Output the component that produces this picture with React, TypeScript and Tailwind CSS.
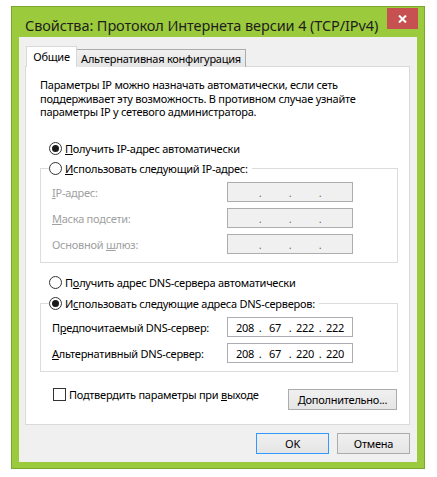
import type { ReactNode } from 'react';

function Radio({ checked }: { checked?: boolean }) {
  return (
    <span className="flex h-[13px] w-[13px] shrink-0 items-center justify-center rounded-full border border-[#333333] bg-white">
      {checked && <span className="h-[7px] w-[7px] rounded-full bg-[#1a1a1a]" />}
    </span>
  );
}

function IpBox({ values, disabled }: { values?: string[]; disabled?: boolean }) {
  const parts = values ?? ['', '', '', ''];
  return (
    <div
      className={
        disabled
          ? 'flex h-[20px] w-[126px] items-center border border-[#adadad] bg-[#f0f0f0] pl-[3px] text-[#6d6d6d]'
          : 'flex h-[20px] w-[126px] items-center border border-[#abadb3] bg-white pl-[3px] text-black'
      }
    >
      {parts.map((p, i) => (
        <div key={i} className="flex items-center">
          <span className="w-[28px] text-center">{p}</span>
          {i < 3 && <span className="flex w-[2px] justify-center">.</span>}
        </div>
      ))}
    </div>
  );
}

function Row({ label, children, disabled }: { label: ReactNode; children: ReactNode; disabled?: boolean }) {
  return (
    <div className="flex h-[20px] items-center">
      <span
        className={
          disabled
            ? 'w-[186px] whitespace-nowrap pl-[11px] text-[#a0a0a0]'
            : 'w-[186px] whitespace-nowrap pl-[11px] text-black'
        }
      >
        {label}
      </span>
      {children}
    </div>
  );
}

function WinButton({ children, focused, className }: { children: ReactNode; focused?: boolean; className?: string }) {
  return (
    <button
      className={`flex h-[21px] items-center justify-center whitespace-nowrap border bg-gradient-to-b from-[#f0f0f0] to-[#e5e5e5] ${
        focused ? 'border-[#3399ff]' : 'border-[#acacac]'
      } ${className ?? ''}`}
    >
      {children}
    </button>
  );
}

export default function App() {
  return (
    <div className="h-[477px] w-[437px] bg-white pl-[11px] pt-[6px] font-['Noto_Sans',sans-serif] text-[11px] leading-[15px] tracking-[-0.25px] text-black">
      <div className="flex h-[463px] w-[414px] flex-col border border-[#7da62f] bg-[#9bcb3d]">
        {/* title bar */}
        <div className="flex h-[30px] items-start justify-between">
          <span className="mt-[8px] whitespace-nowrap pl-[13px] text-[14.5px] leading-[20px] tracking-[-0.1px] text-[#1e1e1e]">
            Свойства: Протокол Интернета версии 4 (TCP/IPv4)
          </span>
          <button className="mr-[6px] mt-[1px] flex h-[21px] w-[31px] shrink-0 items-center justify-center bg-[#c75050]">
            <svg width="9" height="8" viewBox="0 0 9 8">
              <path d="M1 0.5 L8 7.5 M8 0.5 L1 7.5" stroke="white" strokeWidth="2" />
            </svg>
          </button>
        </div>

        {/* client area */}
        <div className="mx-[7px] mb-[6px] flex-1 bg-[#f0f0f0] pl-[6px] pr-[7px] pt-[9px]">
          {/* tabs */}
          <div className="flex h-[21px] items-end pl-[1px]">
            <div className="relative z-10 flex h-[21px] w-[51px] items-center justify-center border border-b-0 border-[#d9d9d9] bg-white pb-[1px]">
              Общие
            </div>
            <div className="flex h-[18px] w-[169px] items-center justify-center whitespace-nowrap border border-b-0 border-l-0 border-[#acacac] bg-gradient-to-b from-[#f0f0f0] to-[#e5e5e5]">
              Альтернативная конфигурация
            </div>
          </div>

          {/* tab panel */}
          <div className="-mt-px h-[359px] w-[385px] border border-[#d9d9d9] bg-white pl-[14px]">
            <p className="mt-[11px] h-[42px] whitespace-nowrap leading-[13.5px]">
              Параметры IP можно назначать автоматически, если сеть
              <br />
              поддерживает эту возможность. В противном случае узнайте
              <br />
              параметры IP у сетевого администратора.
            </p>

            <div className="mt-[18px] flex h-[20px] items-center whitespace-nowrap pl-[9px]">
              <Radio checked />
              <span className="ml-[3px]">
                <u>П</u>олучить IP-адрес автоматически
              </span>
            </div>

            <fieldset className="w-[358px] border border-[#dcdcdc] pb-[8px]">
              <legend className="ml-[8px] flex h-[20px] items-center whitespace-nowrap bg-white pr-[4px]">
                <Radio />
                <span className="ml-[3px]">
                  <u>И</u>спользовать следующий IP-адрес:
                </span>
              </legend>
              <div className="mt-[4px] flex flex-col gap-[6px]">
                <Row label={<><u>I</u>P-адрес:</>} disabled>
                  <IpBox disabled />
                </Row>
                <Row label={<><u>М</u>аска подсети:</>} disabled>
                  <IpBox disabled />
                </Row>
                <Row label={<>Основной <u>ш</u>люз:</>} disabled>
                  <IpBox disabled />
                </Row>
              </div>
            </fieldset>

            <div className="mt-[9px] flex h-[20px] items-center whitespace-nowrap pl-[9px]">
              <Radio />
              <span className="ml-[3px]">
                П<u>о</u>лучить адрес DNS-сервера автоматически
              </span>
            </div>

            <fieldset className="mt-[1px] w-[358px] border border-[#dcdcdc] pb-[8px]">
              <legend className="ml-[8px] flex h-[20px] items-center whitespace-nowrap bg-white pr-[4px]">
                <Radio checked />
                <span className="ml-[3px]">
                  И<u>с</u>пользовать следующие адреса DNS-серверов:
                </span>
              </legend>
              <div className="mt-[4px] flex flex-col gap-[6px]">
                <Row label={<>П<u>р</u>едпочитаемый DNS-сервер:</>}>
                  <IpBox values={['208', '67', '222', '222']} />
                </Row>
                <Row label={<><u>А</u>льтернативный DNS-сервер:</>}>
                  <IpBox values={['208', '67', '220', '220']} />
                </Row>
              </div>
            </fieldset>

            <div className="mt-[16px] flex w-[357px] items-start justify-between pl-[13px]">
              <div className="flex h-[13px] items-center whitespace-nowrap">
                <span className="h-[13px] w-[13px] border border-[#333333] bg-white" />
                <span className="ml-[3px]">
                  Подтвердить параметры при <u>в</u>ыходе
                </span>
              </div>
              <WinButton className="mt-[1px] w-[109px]">
                <span>
                  <u>Д</u>ополнительно...
                </span>
              </WinButton>
            </div>
          </div>

          {/* dialog buttons */}
          <div className="mt-[8px] flex w-[385px] justify-end gap-[8px]">
            <WinButton focused className="w-[73px]">
              OK
            </WinButton>
            <WinButton className="w-[73px]">Отмена</WinButton>
          </div>
        </div>
      </div>
    </div>
  );
}
